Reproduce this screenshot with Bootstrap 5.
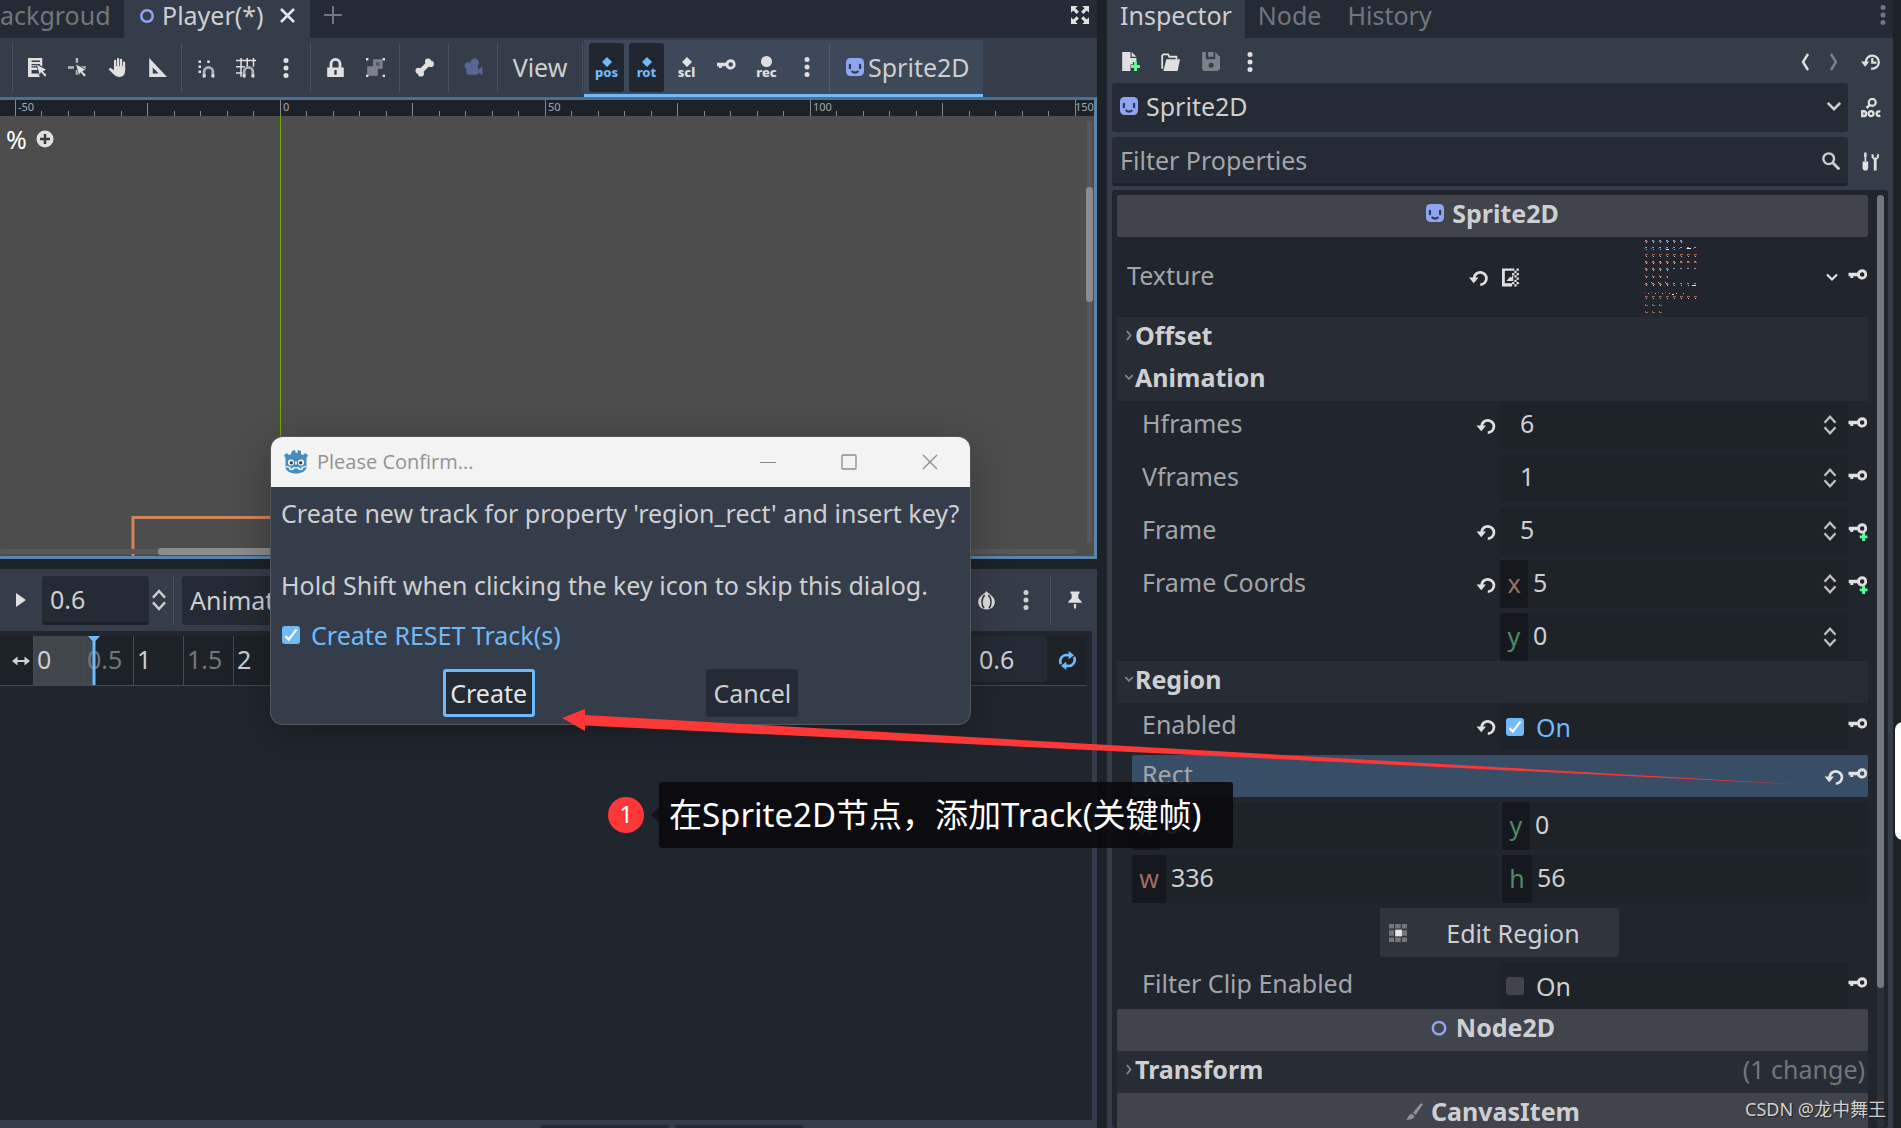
<!DOCTYPE html>
<html lang="en">
<head>
<meta charset="utf-8">
<meta name="viewport" content="width=device-width, initial-scale=1">
<title>Sprite2D - Inspector</title>
<link href="https://cdn.jsdelivr.net/npm/bootstrap@5.3.0/dist/css/bootstrap.min.css" rel="stylesheet">
<style>
:root{--base:#363d4a;--dark:#252b34;--deep:#1d2229;--panel:#21262e;--field:#1e2229;--axis:#15181e;--accent:#70bafa;--txt:#cdcfd2;--dim:#a2a5aa;--faint:#72767d;--icon:#e0e0e0}
body{font-family:"Noto Sans","Noto Sans CJK SC",sans-serif;font-size:25px;line-height:34px;color:var(--txt);background:var(--deep)}
svg{display:block;flex:none}
button,input,select{font:inherit;color:inherit}
input,select{min-width:0}
.shell{height:100vh}
.plain{background:none;border:0;padding:0;color:inherit;display:flex;align-items:center;justify-content:center;flex:none}
.tool{width:40px;height:49px}
.vsep{width:1px;height:49px;background:#4b515d;flex:none}
.editor{flex:1 1 0;min-width:0}
.tabstrip{height:38px;background:var(--dark);color:var(--faint);flex:none}
.tabstrip a{color:inherit;text-decoration:none;white-space:nowrap;height:38px;padding-bottom:8px}
.tabstrip a.current{background:var(--base);color:var(--txt)}
.tab-cut{width:124px}
.tab-scene{width:186px}
.tab-dock{padding-left:13px;padding-right:13px}
.tab-new{width:46px}
.tools{height:59px;background:var(--base);color:var(--icon);flex:none}
.tools-start{margin-left:12px}
.viewmenu{width:76px;color:var(--txt)}
.viewmenu span{padding-bottom:2px}
.group{height:57px;background:#3d4858;border-bottom:3px solid var(--accent);margin-top:2px;margin-left:1px;padding:0 13px 0 5px}
.group .vsep{background:#535c6a}
.node-menu{color:var(--txt)}
.tog{width:35px;height:49px;border-radius:3px;margin-right:5px}
.tog.on{background:#212730;color:var(--accent)}
.tag{font-size:13px;font-weight:800;line-height:11px}
.view{height:462px;flex:none;background:#4d4d4d;border:3px solid #5c84aa;border-left:0;border-top-color:#4a7094}
.zoomlbl{left:6px;top:22px;line-height:34px;color:#fff}
.bottom{margin-top:10px;background:var(--base);min-height:0}
.animbar{height:62px;flex:none;padding-right:2px}
.play{width:42px}
.time{width:107px}
.box{background:var(--dark);border:0;border-radius:3px;height:49px;outline:0}
.line{border-bottom:3px solid var(--deep)}
.tracks{background:var(--panel);margin-right:5px;padding-top:5px;min-height:0}
.timeline{height:50px;border-bottom:1px solid #454a53;background:var(--deep);margin-right:5px}
.tick{width:50px;border-left:1px solid #454a53;padding-left:3px;line-height:46px;color:var(--faint);flex:none}
.tick.major{color:var(--txt)}
.tick.filled{background:#41454c}
.tick.part{background:linear-gradient(90deg,#41454c 11px,transparent 11px)}
.playhead{left:87px}
.length{width:76px;height:46px}
.statusbar{height:8px;flex:none}
.status-cell{height:3px;width:128px;background:var(--dark);margin-right:6px}
.status-cell.first{margin-left:541px}
.dock{width:786px;margin-left:10px;margin-right:8px;background:var(--base);flex:none}
.docktools{height:45px;padding-left:3px;padding-top:2px;color:var(--icon)}
.nav-step{width:29px}
.dockrow{height:49px;margin-bottom:5px;padding-left:5px}
.side-tool{width:45px}
.box input::placeholder{color:var(--dim)}
.props{margin:0 5px;background:var(--panel);border-radius:3px;padding:5px 4px 0 5px;min-height:0;overflow:hidden}
.proplist{flex:1 1 0;min-width:0;margin-right:9px}
.vbar{width:7px;background:#2c3037;border-radius:4px}
.vbar div{height:85%;background:#74777c;border-radius:4px}
.cat{height:42px;background:#41444c;font-weight:700;border-radius:2px;padding-bottom:6px}
.sect{height:42px;background:#282c35;font-weight:700;padding:0 3px 6px 6px}
.sect svg{color:#85888d}
.prop{min-height:48px;margin-bottom:5px;color:var(--dim)}
.prop.short{min-height:47px}
.prop>label,.prop>span{padding-left:25px;padding-bottom:5px;flex:1 1 0}
.prop>svg{color:var(--icon)}
.prop.tex{height:80px}
.prop.tex>span{padding-left:10px}
.tex-revert{margin-right:14px}
.tex-sheet{margin-left:123px;margin-right:126px}
.val{width:348px;height:48px;background:var(--field);color:var(--txt);border-radius:3px;padding-right:8px}
.short .val{height:47px;padding-left:6px;gap:12px}
.val input[type=number],.half input{background:none;border:0;outline:0;flex:1 1 0;padding:0 5px 4px;appearance:textfield;-moz-appearance:textfield}
.val input.solo{padding-left:20px}
.val>svg{color:#bfc1c4}
.rv{width:28px}
.ky{width:20px}
input::-webkit-inner-spin-button{display:none}
.ax{background:var(--axis);width:28px;height:48px;line-height:46px;text-align:center;border-radius:3px;flex:none}
.ax.wide{width:34px}
.ax.mid{width:30px}
.red{color:#9c6f62}.green{color:#4f8a67}
.tick-box{appearance:none;width:18px;height:18px;border-radius:3px;background:#41444c;flex:none;margin:0}
.tick-box:checked{background:var(--accent) url("data:image/svg+xml,%3Csvg xmlns='http://www.w3.org/2000/svg' viewBox='0 0 16 16'%3E%3Cpath d='M3 9l3 3 7-9' fill='none' stroke='%23fff' stroke-width='2'/%3E%3C/svg%3E") center/contain}
.blue{color:var(--accent)}
.muted{color:var(--faint)}
.rectrow{height:42px;margin:0 0 5px 15px;padding-left:10px;background:#384e66;color:var(--dim);border-radius:2px}
.rectrow span{padding-bottom:5px}
.rectrow svg{color:var(--icon)}
.pair{margin:0 0 5px 15px;gap:4px}
.half{flex:1 1 0;background:var(--field);height:48px;min-width:0;border-radius:3px}
.edit-region{width:239px;height:49px;margin-bottom:5px;margin-left:263px;padding-left:9px;background:#30343d;border-radius:3px}
.confirm{left:271px;top:437px;width:699px;border-radius:12px;background:var(--base);overflow:hidden;box-shadow:0 0 0 1px #55585e,0 10px 40px rgba(0,0,0,.3)}
.caption{height:50px;background:#f3f3f3;color:#929292;font-family:"Open Sans","Noto Sans",sans-serif;font-size:20px;padding-left:12px}
.caption button{width:81px;height:50px;color:#8c8c8c}
.dlg{padding-top:8px;padding-bottom:7px;line-height:36px}
.dlg p{margin:0;padding:0 10px;min-height:36px;white-space:nowrap}
.opt{height:66px;padding-left:11px;padding-bottom:2px;gap:11px}
.dlg .box{width:92px;height:48px}
.dlg .focus{border:3px solid var(--accent);color:#e4e5e7}
.note{left:659px;top:782px;border-radius:3px;background:rgba(10,10,13,.9);color:#fff;font-size:33px;line-height:66px;padding:0 31px 0 10px;white-space:nowrap;font-family:"Noto Sans","Noto Sans CJK SC",sans-serif}
.note::before{content:"";position:absolute;left:-8px;top:25px;border:8px solid transparent;border-left:0;border-right-color:#111317}
.num{left:608px;top:797px;width:36px;height:36px;line-height:34px;border-radius:50%;background:#fc3737;color:#fff;font-size:24px;text-align:center}
.credit{right:15px;bottom:6px;font-size:18px;line-height:26px;color:#d0d0d0;text-shadow:1px 1px 1px #222}
.sidebtn{right:-14px;top:722px;width:20px;height:118px;border-radius:8px;background:#fff}
.pointer{pointer-events:none}
</style>
<script src="https://cdn.jsdelivr.net/npm/bootstrap@5.3.0/dist/js/bootstrap.bundle.min.js"></script>
</head>
<body class="overflow-hidden">
<svg width="0" height="0" class="position-absolute" aria-hidden="true">
<defs>
<symbol id="sprite" viewBox="0 0 16 16"><rect width="16" height="16" rx="4" fill="#8da5f3"/><path d="M3.500 6v3M12.500 6v3" stroke="#343b48" stroke-width="2" stroke-linecap="round"/><path d="M5 11.500q3 3 6 0" fill="none" stroke="#343b48" stroke-width="1.800"/></symbol>
<symbol id="dots" viewBox="0 0 16 20"><g fill="currentColor"><circle cx="8" cy="2.500" r="2.500"/><circle cx="8" cy="10" r="2.500"/><circle cx="8" cy="17.500" r="2.500"/></g></symbol>
<symbol id="key" viewBox="0 0 16 16"><path d="M11.500 1a4.300 4.300 0 0 0-4.100 3H0v3h1.500v1.500H4V7h3.400A4.300 4.300 0 1 0 11.500 1zm0 2.500a1.900 1.900 0 1 1 0 3.800 1.900 1.900 0 0 1 0-3.800z" fill="currentColor" fill-rule="evenodd"/></symbol>
<symbol id="keyadd" viewBox="0 0 16 16"><use href="#key" width="16" height="16"/><path d="M11.500 9h2.500v2.300h2v2.400h-2V16h-2.500v-2.300h-2v-2.400h2z" fill="#5fff97"/></symbol>
<symbol id="revert" viewBox="0 0 16 16"><path d="M4.300 8.500A5.200 5.200 0 1 1 9.500 14" fill="none" stroke="currentColor" stroke-width="2.300"/><path d="M0 8h8l-4 4.800z" fill="currentColor"/></symbol>
<symbol id="spin" viewBox="0 0 16 20"><path d="M3 8l5-5.500L13 8M3 12l5 5.500 5-5.500" fill="none" stroke="currentColor" stroke-width="2"/></symbol>
<symbol id="magnet" viewBox="0 0 16 16"><path d="M6.500 15v-4a3.500 3.500 0 0 1 7 0v4" fill="none" stroke="#aeb1b6" stroke-width="2.200"/><path d="M5.400 13h2.200v2.500H5.400zM12.400 13h2.200v2.500h-2.200z" fill="currentColor"/></symbol>
<symbol id="arrowr" viewBox="0 0 8 16"><path d="M2 4l3.500 4.500L2 13" fill="none" stroke="currentColor" stroke-width="1.800"/></symbol>
<symbol id="arrowd" viewBox="0 0 16 16"><path d="M3 5.500l5 5 5-5" fill="none" stroke="currentColor" stroke-width="2.200"/></symbol>
<symbol id="pick" viewBox="0 0 10 12"><path d="M0 0l3 11 1.500-3L8 12l1.800-1.800L6.500 7l3-1.800z" fill="currentColor" stroke="#363d4a" stroke-width=".7"/></symbol>
</defs>
</svg>
<div class="shell d-flex position-relative overflow-hidden">

<main class="editor d-flex flex-column">
  <nav class="tabstrip d-flex align-items-center">
    <a href="#" class="tab-cut d-flex align-items-center">ackgroud</a>
    <a href="#" class="tab-scene current d-flex align-items-center ps-3"><svg width="14" height="18" viewBox="0 0 14 18"><circle cx="7" cy="10" r="5.700" fill="none" stroke="#8da5f3" stroke-width="2.500"/></svg><span class="ms-1 ps-1 me-3">Player(*)</span><svg width="15" height="15" viewBox="0 0 15 15"><path d="M1 1l13 13M14 1L1 14" stroke="#e6e6e6" stroke-width="2.500"/></svg></a>
    <button class="plain pb-2 tab-new" aria-label="New scene"><svg width="18" height="18" viewBox="0 0 18 18"><path d="M9 0v18M0 9h18" stroke="#72767d" stroke-width="2"/></svg></button>
    <button class="plain ms-auto pb-2 me-2" aria-label="Distraction free"><svg width="18" height="18" viewBox="0 0 16 16"><path d="M0 0h6L4 2l3 3-2 2-3-3-2 2zM16 0v6l-2-2-3 3-2-2 3-3-2-2zM0 16v-6l2 2 3-3 2 2-3 3 2 2zM16 16h-6l2-2-3-3 2-2 3 3 2-2z" fill="#e0e0e0"/></svg></button>
  </nav>

  <div class="tools d-flex align-items-center">
    <div class="vsep tools-start me-1"></div>
    <button class="plain tool" aria-label="List select"><svg width="19" height="19" viewBox="0 0 16 16"><path d="M0 0h12v7l-2-1V5H3v1h5l-1 1H3v1h5l1 2H3v3h6l1 3H0zM3 2v1.300h7V2z" fill="currentColor" fill-rule="evenodd"/><use href="#pick" x="7" y="5" width="9" height="11"/></svg></button>
    <button class="plain tool" aria-label="Pivot"><svg width="19" height="19" viewBox="0 0 16 16"><path d="M6.500 0h2v4h-2zM0 7h5v2H0zM10 7h5v2h-5zM6.500 10h2v4h-2z" fill="#b9bbbf"/><use href="#pick" x="6" y="5" width="10" height="11"/></svg></button>
    <button class="plain tool" aria-label="Pan"><svg width="19" height="19" viewBox="0 0 16 16"><path d="M6 2.500v6M8.500 1v8M11 1.500V9M13.500 4v6" stroke="currentColor" stroke-width="1.900" stroke-linecap="round"/><path d="M5 7h9.400v4c0 3-2 5-4.500 5S5.500 14.500 4.500 13.500L.5 9.500 2 8.300l3 2z" fill="currentColor"/></svg></button>
    <button class="plain tool" aria-label="Ruler"><svg width="19" height="19" viewBox="0 0 16 16"><path d="M1 0l15 16H1zm3 8v5h5z" fill="currentColor" fill-rule="evenodd"/></svg></button>
    <div class="vsep mx-1"></div>
    <button class="plain tool" aria-label="Smart snap"><svg width="20" height="20" viewBox="0 0 16 16"><path d="M2 2h2v2H2zM2 6h2v2H2zM2 10h2v2H2zM9 2h2v2H9z" fill="currentColor"/><use href="#magnet" width="16" height="16"/></svg></button>
    <button class="plain tool" aria-label="Grid snap"><svg width="20" height="20" viewBox="0 0 16 16"><path d="M4 0v15M9 0v7M14 0v7M0 2h16M0 7h7M0 12h5" stroke="currentColor" stroke-width="1.200"/><use href="#magnet" width="16" height="16"/></svg></button>
    <button class="plain tool" aria-label="Snapping options"><svg width="16" height="20"><use href="#dots"/></svg></button>
    <div class="vsep mx-1"></div>
    <button class="plain tool" aria-label="Lock"><svg width="19" height="19" viewBox="0 0 16 16"><path d="M8 0a5 5 0 0 0-5 5v3H1v8h14V8h-2V5a5 5 0 0 0-5-5zm0 2.400A2.600 2.600 0 0 1 10.600 5v3H5.400V5A2.600 2.600 0 0 1 8 2.400zM7 10h2v4H7z" fill="currentColor" fill-rule="evenodd"/></svg></button>
    <button class="plain tool" aria-label="Group"><svg width="19" height="19" viewBox="0 0 16 16"><path d="M6 1h8v8h-4v6H1V7h5z" fill="#7d828a"/><path d="M8.500 3.500h3v3h-3z" fill="#50565f"/><path d="M0 0h2v2H0zM14 0h2v2h-2zM0 14h2v2H0zM14 14h2v2h-2z" fill="currentColor"/></svg></button>
    <div class="vsep mx-1"></div>
    <button class="plain tool" aria-label="Skeleton"><svg width="19" height="19" viewBox="0 0 16 16"><path d="M4.500 11.500l7-7" stroke="currentColor" stroke-width="4"/><g fill="currentColor"><circle cx="3" cy="10.800" r="2.600"/><circle cx="5" cy="13" r="2.600"/><circle cx="11" cy="3" r="2.600"/><circle cx="13.300" cy="5" r="2.600"/></g></svg></button>
    <div class="vsep mx-1"></div>
    <button class="plain tool" aria-label="Camera"><svg width="19" height="19" viewBox="0 0 16 16"><g fill="#5a6796"><circle cx="9" cy="4" r="3.500"/><circle cx="3.500" cy="6.500" r="3"/><rect x="2" y="7" width="10" height="7" rx="1.500"/><path d="M12 10l3.500-3v7.500L12 12z"/></g></svg></button>
    <div class="vsep mx-1"></div>
    <button class="plain viewmenu"><span>View</span></button>
    <div class="vsep ms-1"></div>
    <div class="group d-flex align-items-center">
      <button class="plain tog on flex-column"><svg width="10" height="10" viewBox="0 0 10 10"><path d="M5 0l5 5-5 5-5-5z" fill="currentColor"/></svg><span class="tag">pos</span></button>
      <button class="plain tog on flex-column"><svg width="10" height="10" viewBox="0 0 10 10"><path d="M5 0l5 5-5 5-5-5z" fill="currentColor"/></svg><span class="tag">rot</span></button>
      <button class="plain tog flex-column"><svg width="10" height="10" viewBox="0 0 10 10"><path d="M5 0l5 5-5 5-5-5z" fill="currentColor"/></svg><span class="tag">scl</span></button>
      <button class="plain tog" aria-label="Insert key"><svg width="19" height="19"><use href="#key"/></svg></button>
      <button class="plain tog flex-column"><svg width="11" height="11" viewBox="0 0 10 10"><circle cx="5" cy="5" r="5" fill="currentColor"/></svg><span class="tag">rec</span></button>
      <button class="plain tog" aria-label="Key options"><svg width="16" height="20"><use href="#dots"/></svg></button>
      <div class="vsep"></div>
      <button class="plain ps-3 node-menu"><svg width="18" height="18" class="me-1"><use href="#sprite"/></svg>Sprite2D</button>
    </div>
  </div>

  <section class="view position-relative overflow-hidden">
    <svg class="position-absolute top-0 start-0" width="100%" height="100%">
      <defs><pattern id="minor" x="14" width="265" height="16" patternUnits="userSpaceOnUse"><path d="M27.500 11v5M54.500 11v5M80.500 11v5M107.500 11v5M133.500 3v13M160.500 11v5M186.500 11v5M213.500 11v5M239.500 11v5M1.500 0v16" stroke="#85888d"/></pattern></defs>
      <rect width="100%" height="16" fill="#1d2229"/><rect width="100%" height="16" fill="url(#minor)"/>
      <g fill="#a6a8ab" font-size="11"><text x="18" y="11">-50</text><text x="283" y="11">0</text><text x="548" y="11">50</text><text x="813" y="11">100</text><text x="1075" y="11">150</text></g>
      <path d="M280.500 16v500" stroke="#75a900"/>
      <path d="M133 470V417.500h300" fill="none" stroke="#d2845d" stroke-width="3"/>
      <rect x="1087" y="21" width="5" height="422" rx="2" fill="#575757"/><rect x="1086" y="87" width="7" height="115" rx="3" fill="#8c8c8c"/>
      <rect y="449" width="1077" height="5" rx="2" fill="#575757"/><rect x="158" y="448" width="300" height="7" rx="3" fill="#8c8c8c"/>
    </svg>
    <div class="zoomlbl position-absolute d-flex align-items-center">%<svg class="ms-2" width="20" height="20" viewBox="0 0 20 20"><circle cx="10" cy="10" r="8.500" fill="#e0e0e0"/><path d="M10 5v10M5 10h10" stroke="#3a3a3a" stroke-width="2.500"/></svg></div>
  </section>

  <section class="bottom flex-fill d-flex flex-column">
    <div class="animbar d-flex align-items-center">
      <button class="plain play" aria-label="Play"><svg width="12" height="14" viewBox="0 0 12 14"><path d="M1 0l10 7-10 7z" fill="#e0e0e0"/></svg></button>
      <input class="box line time px-2" value="0.6" aria-label="Current time">
      <svg width="20" height="24"><use href="#spin"/></svg>
      <div class="vsep ms-1 me-2"></div>
      <button class="box px-2">Animation</button>
      <button class="plain tool ms-auto" aria-label="Onion skinning"><svg width="19" height="19" viewBox="0 0 16 16"><path d="M8 0c1 2.500 7 4 7 9 0 4-3 6.500-7 6.500S1 13 1 9c0-5 6-6.500 7-9z" fill="#e0e0e0"/><path d="M6.500 3.500C3.500 6 3.500 12 6 14.500M9.500 3.500c3 2.500 3 8.500.5 11" fill="none" stroke="#363d4a" stroke-width="1.300"/></svg></button>
      <button class="plain tool" aria-label="Onion options"><svg width="16" height="20"><use href="#dots"/></svg></button>
      <div class="vsep mx-1"></div>
      <button class="plain tool" aria-label="Pin"><svg width="18" height="19" viewBox="0 0 16 16"><path d="M4 0h8v2h-1v4l3 3v1H2V9l3-3V2H4zM7 11h2v3l-1 2-1-2z" fill="#e0e0e0"/></svg></button>
    </div>
    <div class="tracks flex-fill">
      <div class="timeline d-flex position-relative">
        <svg width="33" height="48" viewBox="0 0 33 48"><path d="M15 25h12" stroke="#d0d2d4" stroke-width="2"/><path d="M17.500 20.500v9L12 25zM24.500 20.500v9L30 25z" fill="#d0d2d4"/></svg>
        <span class="tick major filled">0</span><span class="tick part">0.5</span><span class="tick major">1</span><span class="tick">1.5</span><span class="tick major">2</span>
        <svg class="position-absolute top-0 playhead" width="14" height="49" viewBox="0 0 14 49"><path d="M1 0h12L8.500 5v44h-3V5z" fill="#70bafa"/></svg>
        <input class="box length ms-auto px-2" value="0.6" aria-label="Length">
        <button class="plain tool" aria-label="Loop"><svg width="19" height="19" viewBox="0 0 16 16"><path d="M2.500 11A5.200 5.200 0 0 1 8 3.500h2M13.500 5A5.200 5.200 0 0 1 8 12.500H6" fill="none" stroke="#70bafa" stroke-width="2.200"/><path d="M9 0l4.500 3.500L9 7zM7 9v7l-4.500-3.500z" fill="#70bafa"/></svg></button>
      </div>
    </div>
    <div class="statusbar d-flex align-items-end"><div class="status-cell first"></div><div class="status-cell"></div></div>
  </section>
</main>

<aside class="dock d-flex flex-column">
  <nav class="tabstrip d-flex">
    <a href="#" class="tab-dock current d-flex align-items-center">Inspector</a>
    <a href="#" class="tab-dock d-flex align-items-center">Node</a>
    <a href="#" class="tab-dock d-flex align-items-center">History</a>
    <button class="plain ms-auto pb-2" aria-label="Dock menu"><svg width="20" height="20"><use href="#dots"/></svg></button>
  </nav>
  <div class="docktools d-flex align-items-center">
    <button class="plain tool" aria-label="New resource"><svg width="19" height="19" viewBox="0 0 16 16"><path d="M1 0h7v5h5v3.500h-3v2H8V16H1zM9 0l4 4H9z" fill="currentColor"/><path d="M11 8.500h2.500V11H16v2.500h-2.500V16H11v-2.500H8.500V11H11z" fill="#5fff97"/></svg></button>
    <button class="plain tool" aria-label="Open"><svg width="19" height="19" viewBox="0 0 16 16"><path d="M1 14V3l1-1h4l1 2h6v2" fill="none" stroke="currentColor" stroke-width="1.500"/><path d="M4.500 6H16l-2 10H2z" fill="currentColor"/></svg></button>
    <button class="plain tool" aria-label="Save"><svg width="19" height="19" viewBox="0 0 16 16"><path d="M1 0h3v6h8V0l4 4v10l-2 2H2l-1-2zM8.500 9a2.200 2.200 0 1 0 .1 0zM6 0h4.500v4H6z" fill="#7d828a" fill-rule="evenodd"/></svg></button>
    <button class="plain tool" aria-label="Resource options"><svg width="16" height="20"><use href="#dots"/></svg></button>
    <button class="plain nav-step ms-auto" aria-label="Back"><svg width="10" height="18" viewBox="0 0 10 18"><path d="M8 1L3 9l5 8" fill="none" stroke="currentColor" stroke-width="2.400"/></svg></button>
    <button class="plain nav-step" aria-label="Forward"><svg width="10" height="18" viewBox="0 0 10 18"><path d="M2 1l5 8-5 8" fill="none" stroke="#7d828a" stroke-width="2.400"/></svg></button>
    <button class="plain side-tool" aria-label="History"><svg width="19" height="19" viewBox="0 0 16 16"><path d="M4 9a5.500 5.500 0 1 1 4.500 5M9.500 5v4h3.500" fill="none" stroke="currentColor" stroke-width="1.900"/><path d="M0 8h7l-3.500 4.500z" fill="currentColor"/></svg></button>
  </div>
  <div class="dockrow d-flex">
    <button class="box flex-fill d-flex align-items-center ps-2 pe-1 pb-1"><svg width="18" height="18"><use href="#sprite"/></svg><span class="ms-2">Sprite2D</span><svg class="ms-auto" width="20" height="20"><use href="#arrowd"/></svg></button>
    <button class="plain side-tool" aria-label="Documentation"><svg width="20" height="20" viewBox="0 0 16 16"><circle cx="9" cy="3.500" r="2.800" fill="none" stroke="#e0e0e0" stroke-width="1.700"/><path d="M7 5.500L4.500 8" stroke="#e0e0e0" stroke-width="2"/><path d="M1 10.500v4h1c2.700 0 2.700-4 0-4zM8 10.500a2 2 0 1 0 .1 0zM15.500 10.900c-4-1.300-4 4.700 0 3.200" fill="none" stroke="#e0e0e0" stroke-width="1.900"/></svg></button>
  </div>
  <div class="dockrow d-flex mb-1">
    <div class="box line flex-fill d-flex align-items-center pe-2"><input class="bg-transparent border-0 flex-fill px-2" placeholder="Filter Properties" aria-label="Filter Properties"><svg width="19" height="19" viewBox="0 0 16 16"><circle cx="6.500" cy="6.500" r="4.500" fill="none" stroke="#cdcfd2" stroke-width="2"/><path d="M9.500 9.500l6 6" stroke="#cdcfd2" stroke-width="2.400"/></svg></div>
    <button class="plain side-tool" aria-label="Property tools"><svg width="18" height="19" viewBox="0 0 16 16"><path d="M3 1v7" stroke="#e0e0e0" stroke-width="1.500"/><path d="M2 0h2v4H2zM.5 8h5v5.500a2.500 2.500 0 0 1-5 0zM8.500 1v3.500l2 2V16h2.500V6.500l2-2V1l-1.800 1v2.500h-2.800V2z" fill="#e0e0e0"/></svg></button>
  </div>
  <div class="props flex-fill d-flex">
    <div class="proplist">
      <div class="cat d-flex align-items-center justify-content-center"><svg width="18" height="18" class="me-2"><use href="#sprite"/></svg>Sprite2D</div>
      <div class="prop tex d-flex align-items-center m-0"><span>Texture</span>
        <svg class="tex-revert" width="19" height="19"><use href="#revert"/></svg>
        <svg width="18" height="19" viewBox="0 0 16 16"><path d="M0 0h9v2H2.500v11H9v3H0z" fill="#e0e0e0"/><path d="M4 11l3-3.500 1.500.5L10 5v6z" fill="#e0e0e0"/><path d="M9 0h2v2H9zM13 0h2v2h-2zM11 2h2v2h-2zM9 4h2v2H9zM13 4h2v2h-2zM11 6h2v2h-2zM13 8h2v2h-2zM11 10h2v2h-2zM9 12h2v2H9zM13 12h2v2h-2zM11 14h2v2h-2z" fill="#e0e0e0"/></svg>
        <svg class="tex-sheet" width="55" height="76" viewBox="0 0 55 76">
          <g fill="none" stroke-width="1"><path d="M2 1.500h39M2 8.500h53M2 22.500h53M2 29.500h53M2 44.500h53" stroke="#8d99b8" stroke-dasharray="2 5"/><path d="M2 2.500h39M2 15.500h53M2 23.500h53M2 37.500h23M2 30.500h25M2 45.500h25M2 57.500h53M2 66.500h18M2 73.500h18" stroke="#a8604a" stroke-dasharray="3 4"/><path d="M1 9.500h54M2 16.500h53M2 36.500h16M1 53.500h28M2 45.500h32M2 58.500h53M2 65.500h16M2 72.500h16" stroke="#5f6a9a" stroke-dasharray="1 6"/><path d="M3 3.500h38M3 10.500h30M3 17.500h52M3 24.500h30M3 31.500h24M3 38.500h22M8 43.500h20M5 54.500h36M3 59.500h50M3 46.500h50" stroke="#d0b9a0" stroke-dasharray="1 6"/><path d="M44 9.500h4M49 46.500h4M23 10.500h3M29 55.500h2" stroke="#f0f0f0"/></g></svg>
        <svg class="me-2" width="16" height="16"><use href="#arrowd"/></svg>
        <svg class="ky" height="19"><use href="#key"/></svg></div>
      <div class="sect d-flex align-items-center"><svg width="12" height="16"><use href="#arrowr"/></svg>Offset</div>
      <div class="sect d-flex align-items-center"><svg width="12" height="14"><use href="#arrowd"/></svg>Animation</div>
      <div class="prop d-flex align-items-center"><label for="hf">Hframes</label><svg class="rv" height="19"><use href="#revert"/></svg><div class="val d-flex align-items-center"><input class="solo" id="hf" type="number" value="6"><svg width="20" height="22"><use href="#spin"/></svg></div><svg class="ky" height="19"><use href="#key"/></svg></div>
      <div class="prop d-flex align-items-center"><label for="vf">Vframes</label><div class="val d-flex align-items-center"><input class="solo" id="vf" type="number" value="1"><svg width="20" height="22"><use href="#spin"/></svg></div><svg class="ky" height="19"><use href="#key"/></svg></div>
      <div class="prop d-flex align-items-center"><label for="fr">Frame</label><svg class="rv" height="19"><use href="#revert"/></svg><div class="val d-flex align-items-center"><input class="solo" id="fr" type="number" value="5"><svg width="20" height="22"><use href="#spin"/></svg></div><svg class="ky" height="19"><use href="#keyadd"/></svg></div>
      <div class="prop d-flex align-items-center"><label for="fx">Frame Coords</label><svg class="rv" height="19"><use href="#revert"/></svg><div class="val d-flex align-items-center"><span class="ax red">x</span><input id="fx" type="number" value="5"><svg width="20" height="22"><use href="#spin"/></svg></div><svg class="ky" height="19"><use href="#keyadd"/></svg></div>
      <div class="prop d-flex align-items-center m-0"><span></span><div class="val d-flex align-items-center"><span class="ax green">y</span><input type="number" value="0" aria-label="Frame Coords y"><svg width="20" height="22"><use href="#spin"/></svg></div><div class="ky"></div></div>
      <div class="sect d-flex align-items-center"><svg width="12" height="14"><use href="#arrowd"/></svg>Region</div>
      <div class="prop short d-flex align-items-center"><label for="en">Enabled</label><svg class="rv" height="19"><use href="#revert"/></svg><div class="val d-flex align-items-center"><input class="tick-box" id="en" type="checkbox" checked><label for="en" class="blue">On</label></div><svg class="ky" height="19"><use href="#key"/></svg></div>
      <div class="rectrow d-flex align-items-center"><span>Rect</span><svg class="ms-auto rv" height="19"><use href="#revert"/></svg><svg class="ky" height="19"><use href="#key"/></svg></div>
      <div class="pair d-flex"><div class="half d-flex"><span class="ax red">x</span><input value="0" aria-label="x"></div><div class="half d-flex"><span class="ax green">y</span><input value="0" aria-label="y"></div></div>
      <div class="pair d-flex"><div class="half d-flex"><span class="ax wide red">w</span><input value="336" aria-label="w"></div><div class="half d-flex"><span class="ax mid green">h</span><input value="56" aria-label="h"></div></div>
      <button class="edit-region plain justify-content-start"><svg width="18" height="18" viewBox="0 0 16 16"><path d="M0 0h4.500v4H0zM5.500 0h5v4h-5zM11.500 0H16v4h-4.500zM0 5.500h4.500v5H0zM11.500 5.500H16v5h-4.500zM0 12h4.500v4H0zM5.500 12h5v4h-5zM11.500 12H16v4h-4.500z" fill="#73767c"/><path d="M5.500 5h6v6h-6z" fill="#e6e6e6"/></svg><span class="flex-fill">Edit Region</span></button>
      <div class="prop short d-flex align-items-center m-0"><label for="fc">Filter Clip Enabled</label><div class="val d-flex align-items-center"><input class="tick-box" id="fc" type="checkbox"><label for="fc">On</label></div><svg class="ky" height="19"><use href="#key"/></svg></div>
      <div class="cat d-flex align-items-center justify-content-center"><svg width="18" height="18" viewBox="0 0 16 16" class="me-2"><circle cx="8" cy="9" r="5.500" fill="none" stroke="#8da5f3" stroke-width="2.200"/></svg>Node2D</div>
      <div class="sect d-flex align-items-center"><svg width="12" height="16"><use href="#arrowr"/></svg>Transform<span class="ms-auto fw-normal muted">(1 change)</span></div>
      <div class="cat d-flex align-items-center justify-content-center"><svg width="18" height="18" viewBox="0 0 16 16" class="me-2"><path d="M14 1l2 1-6.500 9.500-2.500-2zM6 10.500L8.500 12.500C8 15.500 4 16 1 15.500c2-1 2-5 5-5z" fill="#8e8f92"/></svg>CanvasItem</div>
    </div>
    <div class="vbar"><div></div></div>
  </div>
</aside>

<div class="confirm position-absolute" role="dialog" aria-label="Please Confirm">
  <div class="caption d-flex align-items-center">
    <svg width="26" height="26" viewBox="0 0 26 26" class="me-2"><path d="M9 2l3-1 .8 3h1.400L15 1l3 1v3l2 1 2.500-2L25 6.500 23.500 9v9c0 4-5 6.500-10.500 6.500S2.500 22 2.500 18V9L1 6.500 3.500 4 6 6l2-1z" fill="#478cbf"/><circle cx="8" cy="13.500" r="3" fill="#fff"/><circle cx="18" cy="13.500" r="3" fill="#fff"/><circle cx="8.300" cy="13.700" r="1.700" fill="#414042"/><circle cx="17.700" cy="13.700" r="1.700" fill="#414042"/><path d="M13 12.500v3" stroke="#fff" stroke-width="1.600"/><path d="M2.500 17.500l4.500.8v2h3v-1.500h6v1.500h3v-2l4.500-.8" fill="none" stroke="#fff" stroke-width="1.200"/></svg>
    <span class="me-auto">Please Confirm...</span>
    <button class="plain" aria-label="Minimize"><svg width="16" height="16" viewBox="0 0 16 16"><path d="M0 8.500h16" stroke="currentColor"/></svg></button>
    <button class="plain" aria-label="Maximize"><svg width="16" height="16" viewBox="0 0 16 16"><rect x="1" y="1" width="14" height="14" rx="1" fill="none" stroke="currentColor" stroke-width="1.300"/></svg></button>
    <button class="plain" aria-label="Close"><svg width="16" height="16" viewBox="0 0 16 16"><path d="M1 1l14 14M15 1L1 15" stroke="currentColor" stroke-width="1.300"/></svg></button>
  </div>
  <div class="dlg">
    <p>Create new track for property 'region_rect' and insert key?</p><p></p>
    <p>Hold Shift when clicking the key icon to skip this dialog.</p>
    <div class="opt blue d-flex align-items-center"><input class="tick-box" id="reset" type="checkbox" checked><label for="reset">Create RESET Track(s)</label></div>
    <div class="d-flex justify-content-evenly"><button class="box focus p-0">Create</button><button class="box p-0">Cancel</button></div>
  </div>
</div>

<svg class="pointer position-absolute top-0 start-0" width="1901" height="1128" aria-hidden="true"><path d="M562 718l23-9v6L1800 784.500 585 725.500v5.500z" fill="#fc3737"/></svg>
<div class="num position-absolute">1</div>
<div class="note position-absolute">在Sprite2D节点，添加Track(关键帧)</div>
<div class="sidebtn position-absolute"></div>
<div class="credit position-absolute">CSDN @龙中舞王</div>
</div>
</body>
</html>
